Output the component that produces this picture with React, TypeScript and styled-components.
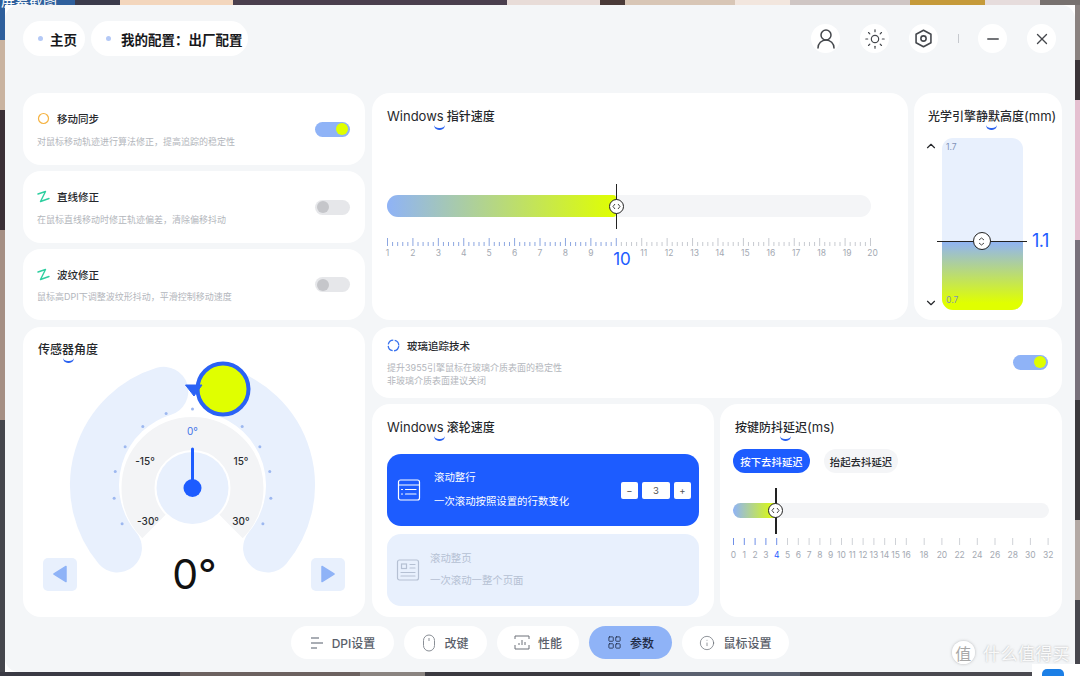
import styled, { createGlobalStyle } from 'styled-components';
import { ChevronDown, ChevronUp, Info, LayoutGrid, Minus, Sun, UserRound, X } from 'lucide-react';

const BLUE = '#1d5cff';
const SOFT_BLUE = '#8fb3f7';
const PALE_BLUE = '#e8f0fd';
const LIME = '#e0ff00';
const TRACK = '#f4f5f7';
const FONT = 'Inter, "Noto Sans CJK SC", sans-serif';

const GlobalStyle = createGlobalStyle`
  * { box-sizing: border-box; }
  html, body { margin: 0; padding: 0; }
  body { font-family: ${FONT}; color: #26282c; overflow: hidden; }
`;

const Desktop = styled.div`
  position: relative;
  width: 1080px;
  height: 676px;
  padding: 5px 5px 4px 5px;
  overflow: hidden;
  background:
    linear-gradient(90deg, #2e5f9c 0 75px, #3b3b4c 75px 120px, #f3d6bd 120px 233px, #4a3f4e 233px 507px, #e8dcd8 507px 600px,
      #4a3a38 600px 625px, #d8c6b6 625px 735px, #f2e6de 735px 790px, #cfc6c4 790px 910px, #c59a3a 910px 985px, #e6dcdc 985px 1040px, #77716f 1040px 1080px)
      top / 100% 5px no-repeat,
    linear-gradient(90deg, #3a3a44 0 180px, #6c6260 180px 360px, #8a8480 360px 425px, #3b3a40 425px 640px, #5b6170 640px 800px, #4a4a50 800px 1080px)
      bottom / 100% 4px no-repeat,
    linear-gradient(180deg, #2e5f9c 0 40px, #c9b3a0 40px 110px, #3a3036 110px 230px, #a58f84 230px 420px, #45464d 420px 676px)
      left / 5px 100% no-repeat,
    linear-gradient(180deg, #8a8280 0 60px, #3a3438 60px 100px, #e5bfd0 100px 240px, #77707a 240px 400px, #3a383c 400px 520px, #b3a9a4 520px 600px, #47474e 600px 676px)
      right / 5px 100% no-repeat;
`;

const DesktopLabel = styled.span`
  position: absolute;
  left: 1px;
  top: -6px;
  color: #fff;
  font-size: 14px;
  line-height: 14px;
`;

const Window = styled.div`
  position: relative;
  display: flex;
  flex-direction: column;
  width: 1070px;
  height: 667px;
  padding: 16px 13px 0 18px;
  border-radius: 14px;
  background: #f4f6f8;
`;

const Header = styled.header`
  display: flex;
  justify-content: space-between;
  align-items: center;
  height: 35px;
  padding-right: 6px;
  margin-bottom: 37px;
`;

const TabRow = styled.div`
  display: flex;
  gap: 6px;
`;

const Tab = styled.div<{ $dotGap: number; $end: number }>`
  display: flex;
  align-items: center;
  gap: ${p => p.$dotGap}px;
  height: 35px;
  padding: 0 ${p => p.$end}px 0 15px;
  border-radius: 18px;
  background: #fff;
  font-size: 13.5px;
  font-weight: 700;
  color: #17181b;

  &::before {
    content: '';
    width: 5px;
    height: 5px;
    border-radius: 50%;
    background: #b4c9f6;
  }
`;

const HeaderTools = styled.div`
  display: flex;
  align-items: center;
  gap: 20px;
`;

const RoundTool = styled.button`
  display: flex;
  align-items: center;
  justify-content: center;
  width: 29px;
  height: 29px;
  padding: 0;
  border: 0;
  border-radius: 50%;
  background: #fff;
  color: #44474c;
`;

const Separator = styled.span`
  width: 1px;
  height: 9px;
  margin-right: -1px;
  background: #c6c9ce;
`;

const Board = styled.main`
  display: grid;
  grid-template-columns: 342px 690px;
  column-gap: 7px;
  height: 524px;
`;

const Column = styled.div`
  display: flex;
  flex-direction: column;
  gap: 6px;
`;

const Card = styled.section`
  position: relative;
  background: #fff;
  border-radius: 18px;
`;

const RuleCard = styled(Card)<{ $height: number }>`
  display: flex;
  justify-content: space-between;
  align-items: center;
  height: ${p => p.$height}px;
  padding: 1px 15px 0 14px;
`;

const RuleHead = styled.div`
  display: flex;
  align-items: center;
  gap: 7px;
  height: 14px;
  font-size: 10.5px;
  font-weight: 500;
  color: #26282c;
`;

const RuleText = styled.p<{ $gap: number }>`
  margin: ${p => p.$gap}px 0 0;
  font-size: 9px;
  line-height: 13px;
  color: #b3b6bc;
`;

const Toggle = styled.span<{ $on?: boolean }>`
  display: flex;
  justify-content: ${p => (p.$on ? 'flex-end' : 'flex-start')};
  align-items: center;
  width: 35px;
  height: 15px;
  margin-top: -1px;
  padding: 0 2px;
  border-radius: 8px;
  background: ${p => (p.$on ? SOFT_BLUE : '#e6e7ea')};

  &::after {
    content: '';
    width: 12px;
    height: 12px;
    border-radius: 50%;
    background: ${p => (p.$on ? LIME : '#c5c6ca')};
  }
`;

const Title = styled.h3`
  position: relative;
  display: inline-block;
  margin: 0;
  font-size: 12px;
  line-height: 20px;
  font-weight: 500;
  color: #26282c;
  white-space: nowrap;

  b {
    font-size: 13px;
    font-weight: 400;
  }
`;

const Swoosh = styled.i<{ $left: number }>`
  position: absolute;
  left: ${p => p.$left}px;
  bottom: -3px;
  width: 11px;
  height: 5px;
  border-bottom: 2px solid #2b62f0;
  border-radius: 0 0 8px 8px;
`;

const TopRow = styled.div`
  display: grid;
  grid-template-columns: 536px 148px;
  column-gap: 6px;
  height: 227px;
`;

const SpeedCard = styled(Card)`
  padding: 12px 14px 0 15px;
`;

const SpeedSlider = styled.div`
  width: 484px;
  margin-top: 68px;
`;

const Track = styled.div<{ $height: number }>`
  position: relative;
  height: ${p => p.$height}px;
  border-radius: ${p => p.$height / 2}px;
  background: ${TRACK};
`;

const Fill = styled.div`
  height: 100%;
  border-radius: 11px 3px 3px 11px;
  background: linear-gradient(90deg, ${SOFT_BLUE}, ${LIME});
`;

const Stem = styled.div<{ $length: number }>`
  position: absolute;
  top: 50%;
  width: 1.5px;
  height: ${p => p.$length}px;
  margin: ${p => -p.$length / 2}px 0 0 -0.75px;
  background: #222;
`;

const Knob = styled.div<{ $vertical?: boolean; $size: number }>`
  position: absolute;
  left: 50%;
  top: 50%;
  display: flex;
  align-items: center;
  justify-content: center;
  width: ${p => p.$size}px;
  height: ${p => p.$size}px;
  margin: ${p => -p.$size / 2}px 0 0 ${p => -p.$size / 2}px;
  border: 1.2px solid #222;
  border-radius: 50%;
  background: #fff;
  transform: ${p => (p.$vertical ? 'rotate(90deg)' : 'none')};
`;

const Ruler = styled.svg`
  display: block;
  overflow: visible;
`;

const HeightCard = styled(Card)`
  padding: 12px 0 0 14px;
`;

const HeightRow = styled.div`
  display: flex;
  height: 172px;
  margin-top: 11px;
`;

const Chevrons = styled.div`
  display: flex;
  flex-direction: column;
  justify-content: space-between;
  width: 14px;
  margin: 1px 0 0 -4px;
  color: #26282c;
`;

const HeightBar = styled.div`
  position: relative;
  display: flex;
  flex-direction: column;
  justify-content: space-between;
  width: 81px;
  margin-left: 4px;
  padding: 3px 4px 4px;
  border-radius: 11px;
  background: ${PALE_BLUE};
`;

const HeightFill = styled.div`
  position: absolute;
  left: 0;
  right: 0;
  bottom: 0;
  border-radius: 0 0 11px 11px;
  background: linear-gradient(180deg, ${SOFT_BLUE}, ${LIME} 90%);
`;

const BarLabel = styled.span`
  position: relative;
  font-size: 8.5px;
  line-height: 12px;
  color: #7f93b8;
`;

const HeightMarker = styled.div`
  position: absolute;
  left: -5px;
  width: 90px;
  height: 1.5px;
  margin-bottom: -1px;
  background: #222;
`;

const HeightValue = styled.span`
  position: absolute;
  left: 95px;
  top: -10px;
  font-size: 18px;
  line-height: 20px;
  letter-spacing: -0.5px;
  color: ${BLUE};
`;

const GlassCard = styled(Card)`
  display: flex;
  justify-content: space-between;
  align-items: center;
  height: 71px;
  margin-top: 1px;
  padding: 0 14px 0 15px;
`;

const BottomRow = styled.div`
  display: grid;
  grid-template-columns: 342px 342px;
  column-gap: 6px;
  height: 213px;
`;

const WheelCard = styled(Card)`
  padding: 12px 15px 0;
`;

const WheelMode = styled.div<{ $active?: boolean }>`
  display: flex;
  align-items: center;
  height: 72px;
  margin-top: ${p => (p.$active ? 16 : 8)}px;
  padding: 0 8px 0 ${p => (p.$active ? 10 : 9)}px;
  border-radius: 14px;
  background: ${p => (p.$active ? BLUE : PALE_BLUE)};
  color: ${p => (p.$active ? '#fff' : '#b5c0d3')};
`;

const ModeText = styled.div<{ $active?: boolean }>`
  flex: 1;
  margin-left: ${p => (p.$active ? 13 : 10)}px;
  font-size: 10.4px;
  line-height: 14px;

  p {
    margin: ${p => (p.$active ? 10 : 8)}px 0 0;
  }
`;

const Stepper = styled.div`
  display: flex;
  gap: 4px;
`;

const StepBox = styled.span<{ $wide?: boolean }>`
  display: flex;
  align-items: center;
  justify-content: center;
  width: ${p => (p.$wide ? 28 : 17)}px;
  height: 17px;
  border-radius: 2px;
  background: #fff;
  font-size: 9.5px;
  color: #555;
`;

const DebounceCard = styled(Card)`
  padding: 12px 13px 0 13px;
`;

const DebounceTitle = styled.div`
  padding-left: 2px;
`;

const PillRow = styled.div`
  display: flex;
  gap: 14px;
  margin-top: 11px;
`;

const Pill = styled.span<{ $active?: boolean }>`
  display: flex;
  align-items: center;
  justify-content: center;
  width: ${p => (p.$active ? 77 : 74)}px;
  height: 24px;
  border-radius: 12px;
  background: ${p => (p.$active ? BLUE : TRACK)};
  color: ${p => (p.$active ? '#fff' : '#26282c')};
  font-size: 10.4px;
  font-weight: 500;
`;

const DebounceSlider = styled.div`
  margin-top: 30px;
  width: 316px;
`;

const DialCard = styled(Card)`
  height: 290px;
  margin-top: 1px;
  padding: 11px 0 0 15px;
`;

const DialStage = styled.div`
  position: relative;
  width: 342px;
  height: 257px;
  margin: 0 0 0 -15px;
`;

const DialSvg = styled.svg`
  display: block;
`;

const DialFooter = styled.div`
  position: absolute;
  left: 20px;
  right: 20px;
  bottom: 23px;
  display: flex;
  justify-content: space-between;
  align-items: center;
`;

const NudgeButton = styled.button`
  display: flex;
  align-items: center;
  justify-content: center;
  width: 34px;
  height: 33px;
  padding: 0;
  border: 0;
  border-radius: 5px;
  background: ${PALE_BLUE};
`;

const DialValue = styled.span`
  margin-left: 1px;
  font-size: 41px;
  line-height: 40px;
  font-weight: 400;
  color: #111;
`;

const Nav = styled.nav`
  display: flex;
  justify-content: center;
  gap: 10px;
  margin-top: 9px;
  margin-left: -5px;
`;

const NavItem = styled.div<{ $active?: boolean; $width: number }>`
  display: flex;
  align-items: center;
  justify-content: center;
  gap: 8px;
  width: ${p => p.$width}px;
  height: 33px;
  border-radius: 17px;
  background: ${p => (p.$active ? SOFT_BLUE : '#fff')};
  color: ${p => (p.$active ? '#1e2a44' : '#5a606a')};
  font-size: 12px;
  font-weight: 500;
`;

const Watermark = styled.div`
  position: absolute;
  right: 5px;
  bottom: 7px;
  display: flex;
  align-items: center;
  gap: 8px;
  color: rgba(255, 255, 255, 0.92);
  font-size: 17px;
  letter-spacing: 0.4px;
  text-shadow: 0 0 2px rgba(120, 120, 120, 0.6);
`;

const WatermarkBadge = styled.span`
  display: flex;
  align-items: center;
  justify-content: center;
  width: 23px;
  height: 23px;
  border-radius: 50%;
  background: rgba(255, 255, 255, 0.95);
  box-shadow: 0 0 3px rgba(120, 120, 120, 0.5);
  color: #a8a8a8;
  font-size: 16px;
  text-shadow: none;
`;

const CornerBox = styled.div`
  position: absolute;
  right: 0;
  bottom: 0;
  width: 48px;
  height: 12px;
  padding: 5px 0 0 10px;
  background: #fff;

  &::after {
    content: '';
    display: block;
    width: 22px;
    height: 12px;
    border-radius: 5px 5px 0 0;
    background: #1c7fe6;
  }
`;

const Zigzag = () => (
  <svg width="13" height="13" viewBox="0 0 13 13" fill="none" stroke="#2ecfa0" strokeWidth="1.4" strokeLinejoin="round" strokeLinecap="round">
    <path d="M1 4 L8.5 1.5 L3.5 11.5 L12 8.5" />
  </svg>
);

const RingIcon = () => (
  <svg width="13" height="13" viewBox="0 0 13 13" fill="none" stroke="#f5b342" strokeWidth="1.2">
    <circle cx="6.5" cy="6.5" r="5" />
  </svg>
);

const GlassIcon = () => (
  <svg width="13" height="13" viewBox="0 0 13 13" fill="none" stroke="#3a72ee" strokeWidth="1.3">
    <circle cx="6.5" cy="6.5" r="5.3" strokeDasharray="6.8 1.5" strokeDashoffset="-0.7" />
  </svg>
);

const NutIcon = () => (
  <svg width="21" height="21" viewBox="0 0 24 24" fill="none" stroke="currentColor" strokeWidth="1.8" strokeLinejoin="round">
    <path d="M12 2.5 L20.5 7.2 V16.8 L12 21.5 L3.5 16.8 V7.2 Z" />
    <circle cx="12" cy="12" r="3" />
  </svg>
);

const Arrows = () => (
  <svg width="9" height="7" viewBox="0 0 9 7" fill="none" stroke="#333" strokeWidth="0.9">
    <path d="M3 1 L1 3.5 L3 6 M6 1 L8 3.5 L6 6" />
  </svg>
);

const LinesIcon = () => (
  <svg width="24" height="22" viewBox="0 0 24 22" fill="none" stroke="currentColor" strokeWidth="1.2" strokeLinecap="round">
    <rect x="1.5" y="1" width="21" height="20" rx="2" />
    <path d="M1.5 6 H22.5 M4.5 10.5 H5.5 M8.5 10.5 H19 M4.5 15 H5.5 M8.5 15 H19" />
  </svg>
);

const PageIcon = () => (
  <svg width="24" height="22" viewBox="0 0 24 22" fill="none" stroke="currentColor" strokeWidth="1.2" strokeLinecap="round">
    <rect x="1.5" y="1" width="21" height="20" rx="2" />
    <rect x="5.5" y="5" width="5" height="4.5" />
    <path d="M14 5.5 H19 M14 9 H19 M5 13.5 H19 M5 17 H19" />
  </svg>
);

const DpiIcon = () => (
  <svg width="14" height="14" viewBox="0 0 14 14" fill="none" stroke="#a9adb4" strokeWidth="2">
    <path d="M1 2 H9 M1 7 H13 M1 12 H7" />
  </svg>
);

const MouseIcon = () => (
  <svg width="14" height="18" viewBox="0 0 14 18" fill="none" stroke="#8a8f96" strokeWidth="1">
    <rect x="1.5" y="1" width="11" height="16" rx="5.5" />
    <path d="M7 4 V7" />
  </svg>
);

const ChartIcon = () => (
  <svg width="16" height="15" viewBox="0 0 16 15" fill="none" stroke="#6c7178" strokeWidth="1">
    <path d="M1 4 V1 H15 V4 M1 10 V14 H15 V10 M5 10 V8 M8 10 V5 M11 10 V7" />
  </svg>
);

const NudgeArrow = ({ flip }: { flip?: boolean }) => (
  <svg width="14" height="18" viewBox="0 0 14 18" fill={SOFT_BLUE} stroke={SOFT_BLUE} strokeWidth="1.5" strokeLinejoin="round">
    <path d={flip ? 'M1 1.5 L13 9 L1 16.5 Z' : 'M13 1.5 L1 9 L13 16.5 Z'} />
  </svg>
);

const speedLabels = Array.from({ length: 20 }, (_, i) => i + 1);

const SpeedRuler = () => {
  const step = 483 / 19;
  const ticks = Array.from({ length: 96 }, (_, i) => i);
  return (
    <Ruler width="500" height="34" style={{ marginTop: 21 }}>
      {ticks.map(i => {
        const x = 0.5 + (i * step) / 5;
        return (
          <line
            key={i}
            x1={x}
            x2={x}
            y1={i % 5 === 0 ? 0 : 4}
            y2={8}
            stroke={i <= 45 ? '#6f8fd8' : '#b9bdc4'}
            strokeWidth="0.8"
          />
        );
      })}
      {speedLabels.map(n => {
        if (n === 10) {
          return (
            <text key={n} x={235} y={27} textAnchor="middle" fontSize="17" fill={BLUE} fontFamily={FONT}>
              10
            </text>
          );
        }
        return (
          <text key={n} x={0.5 + (n - 1) * step + (n > 10 ? 2 : 0)} y={18} textAnchor="middle" fontSize="8.5" fill="#a4a9b2" fontFamily={FONT}>
            {n}
          </text>
        );
      })}
    </Ruler>
  );
};

const debounceStops = [
  ...Array.from({ length: 17 }, (_, i) => ({ value: i, x: i * 10.8 })),
  ...[18, 20, 22, 24, 26, 28, 30, 32].map((value, i) => ({ value, x: 173 + 17.7 * (i + 1) })),
];

const DebounceRuler = () => (
  <Ruler width="320" height="30" style={{ marginTop: 20 }}>
    {debounceStops.map(({ value, x }) => (
      <g key={value}>
        <line x1={x + 0.5} x2={x + 0.5} y1={0} y2={7} stroke={value <= 4 ? '#6f8fe8' : '#cfd2d7'} strokeWidth="1" />
        <text x={x + 0.5} y={20} textAnchor="middle" fontSize="8.5" fill={value === 4 ? BLUE : '#a4a9b2'} fontFamily={FONT}>
          {value}
        </text>
      </g>
    ))}
  </Ruler>
);

// angle in degrees from 12 o'clock, clockwise
const polar = (cx: number, cy: number, r: number, deg: number) => {
  const a = (deg * Math.PI) / 180;
  return [cx + r * Math.sin(a), cy - r * Math.cos(a)];
};

const arc = (cx: number, cy: number, r: number, from: number, to: number) => {
  const [x1, y1] = polar(cx, cy, r, from);
  const [x2, y2] = polar(cx, cy, r, to);
  return `M${x1} ${y1} A${r} ${r} 0 ${to - from > 180 ? 1 : 0} 1 ${x2} ${y2}`;
};

const dialDots = Array.from({ length: 13 }, (_, i) => -117 + i * 19.5);

const dialLabels = [
  { text: '-15°', x: 122, y: 105 },
  { text: '15°', x: 218, y: 105 },
  { text: '-30°', x: 125, y: 165 },
  { text: '30°', x: 218, y: 165 },
];

const Dial = () => {
  const cx = 169.5;
  const cy = 128;
  return (
    <DialSvg width="342" height="257" viewBox="0 0 342 257" fontFamily={FONT}>
      <g fill="none" stroke={PALE_BLUE} strokeWidth="49" strokeLinecap="round">
        <path d={arc(cx, cy - 3, 98, -130, -17)} />
        <path d={arc(cx, cy - 3, 98, 17, 130)} />
      </g>
      <path d={arc(cx, cy, 54.5, -135, 135)} fill="none" stroke="#f3f4f6" strokeWidth="33" />
      <circle cx={cx} cy={cy} r="36" fill={PALE_BLUE} />
      {dialDots.map(d => {
        const [x, y] = polar(cx, cy, 79, d);
        return <circle key={d} cx={x} cy={y} r="1.5" fill="#9db8f0" />;
      })}
      <text x={cx} y={75} textAnchor="middle" fontSize="10" fill="#3f74e8">0°</text>
      {dialLabels.map(l => (
        <text key={l.text} x={l.x} y={l.y} textAnchor="middle" fontSize="10" fontWeight="500" fill="#2a2c30">
          {l.text}
        </text>
      ))}
      <line x1={cx} x2={cx} y1={89} y2={cy} stroke={BLUE} strokeWidth="3" strokeLinecap="round" />
      <circle cx={cx} cy={cy} r="9" fill={BLUE} />
      <circle cx="200" cy="29" r="25.5" fill={LIME} stroke="#2a62f5" strokeWidth="4" />
      <path d="M162.5 25 L179 25 L171 36 Z" fill="#2a62f5" stroke="#2a62f5" strokeLinejoin="round" />
    </DialSvg>
  );
};

const HEIGHT_VALUE_PCT = 40;

export default function App() {
  return (
    <Desktop>
      <GlobalStyle />
      <DesktopLabel>屏幕截图</DesktopLabel>
      <Window>
        <Header>
          <TabRow>
            <Tab $dotGap={7} $end={8}>主页</Tab>
            <Tab $dotGap={10} $end={5}>我的配置：出厂配置</Tab>
          </TabRow>
          <HeaderTools>
            <RoundTool><UserRound size={24} strokeWidth={1.5} /></RoundTool>
            <RoundTool><Sun size={22} strokeWidth={1.3} /></RoundTool>
            <RoundTool><NutIcon /></RoundTool>
            <Separator />
            <RoundTool><Minus size={18} strokeWidth={1.8} /></RoundTool>
            <RoundTool><X size={18} strokeWidth={1.8} /></RoundTool>
          </HeaderTools>
        </Header>

        <Board>
          <Column>
            <RuleCard $height={72}>
              <div>
                <RuleHead><RingIcon />移动同步</RuleHead>
                <RuleText $gap={9}>对鼠标移动轨迹进行算法修正，提高追踪的稳定性</RuleText>
              </div>
              <Toggle $on />
            </RuleCard>
            <RuleCard $height={72}>
              <div>
                <RuleHead><Zigzag />直线修正</RuleHead>
                <RuleText $gap={9}>在鼠标直线移动时修正轨迹偏差，清除偏移抖动</RuleText>
              </div>
              <Toggle />
            </RuleCard>
            <RuleCard $height={71}>
              <div>
                <RuleHead><Zigzag />波纹修正</RuleHead>
                <RuleText $gap={9}>鼠标高DPI下调整波纹形抖动，平滑控制移动速度</RuleText>
              </div>
              <Toggle />
            </RuleCard>
            <DialCard>
              <Title>传感器角度<Swoosh $left={25} /></Title>
              <DialStage>
                <Dial />
                <DialFooter>
                  <NudgeButton><NudgeArrow /></NudgeButton>
                  <DialValue>0°</DialValue>
                  <NudgeButton><NudgeArrow flip /></NudgeButton>
                </DialFooter>
              </DialStage>
            </DialCard>
          </Column>

          <Column>
            <TopRow>
              <SpeedCard>
                <Title><b>Windows</b> 指针速度<Swoosh $left={47} /></Title>
                <SpeedSlider>
                  <Track $height={22}>
                    <Fill style={{ width: '47.4%' }} />
                    <Stem $length={45} style={{ left: '47.4%' }}>
                      <Knob $size={15}><Arrows /></Knob>
                    </Stem>
                  </Track>
                  <SpeedRuler />
                </SpeedSlider>
              </SpeedCard>
              <HeightCard>
                <Title>光学引擎静默高度<b>(mm)</b><Swoosh $left={58} /></Title>
                <HeightRow>
                  <Chevrons>
                    <ChevronUp size={14} strokeWidth={2} />
                    <ChevronDown size={14} strokeWidth={2} />
                  </Chevrons>
                  <HeightBar>
                    <HeightFill style={{ height: `${HEIGHT_VALUE_PCT}%` }} />
                    <BarLabel>1.7</BarLabel>
                    <BarLabel>0.7</BarLabel>
                    <HeightMarker style={{ bottom: `${HEIGHT_VALUE_PCT}%` }}>
                      <Knob $vertical $size={18}><Arrows /></Knob>
                      <HeightValue>1.1</HeightValue>
                    </HeightMarker>
                  </HeightBar>
                </HeightRow>
              </HeightCard>
            </TopRow>

            <GlassCard>
              <div>
                <RuleHead><GlassIcon />玻璃追踪技术</RuleHead>
                <RuleText $gap={9}>提升3955引擎鼠标在玻璃介质表面的稳定性<br />非玻璃介质表面建议关闭</RuleText>
              </div>
              <Toggle $on />
            </GlassCard>

            <BottomRow>
              <WheelCard>
                <Title><b>Windows</b> 滚轮速度<Swoosh $left={47} /></Title>
                <WheelMode $active>
                  <LinesIcon />
                  <ModeText $active>
                    滚动整行
                    <p>一次滚动按照设置的行数变化</p>
                  </ModeText>
                  <Stepper>
                    <StepBox>−</StepBox>
                    <StepBox $wide>3</StepBox>
                    <StepBox>+</StepBox>
                  </Stepper>
                </WheelMode>
                <WheelMode>
                  <PageIcon />
                  <ModeText>
                    滚动整页
                    <p>一次滚动一整个页面</p>
                  </ModeText>
                </WheelMode>
              </WheelCard>
              <DebounceCard>
                <DebounceTitle>
                  <Title>按键防抖延迟<b>(ms)</b><Swoosh $left={45} /></Title>
                </DebounceTitle>
                <PillRow>
                  <Pill $active>按下去抖延迟</Pill>
                  <Pill>抬起去抖延迟</Pill>
                </PillRow>
                <DebounceSlider>
                  <Track $height={15}>
                    <Fill style={{ width: '13.6%' }} />
                    <Stem $length={46} style={{ left: '13.6%' }}>
                      <Knob $size={15}><Arrows /></Knob>
                    </Stem>
                  </Track>
                  <DebounceRuler />
                </DebounceSlider>
              </DebounceCard>
            </BottomRow>
          </Column>
        </Board>

        <Nav>
          <NavItem $width={103}><DpiIcon />DPI设置</NavItem>
          <NavItem $width={83}><MouseIcon />改键</NavItem>
          <NavItem $width={82}><ChartIcon />性能</NavItem>
          <NavItem $width={83} $active><LayoutGrid size={15} strokeWidth={1.3} />参数</NavItem>
          <NavItem $width={107}><Info size={16} strokeWidth={1} />鼠标设置</NavItem>
        </Nav>

        <Watermark>
          <WatermarkBadge>值</WatermarkBadge>
          什么值得买
        </Watermark>
      </Window>
      <CornerBox />
    </Desktop>
  );
}
